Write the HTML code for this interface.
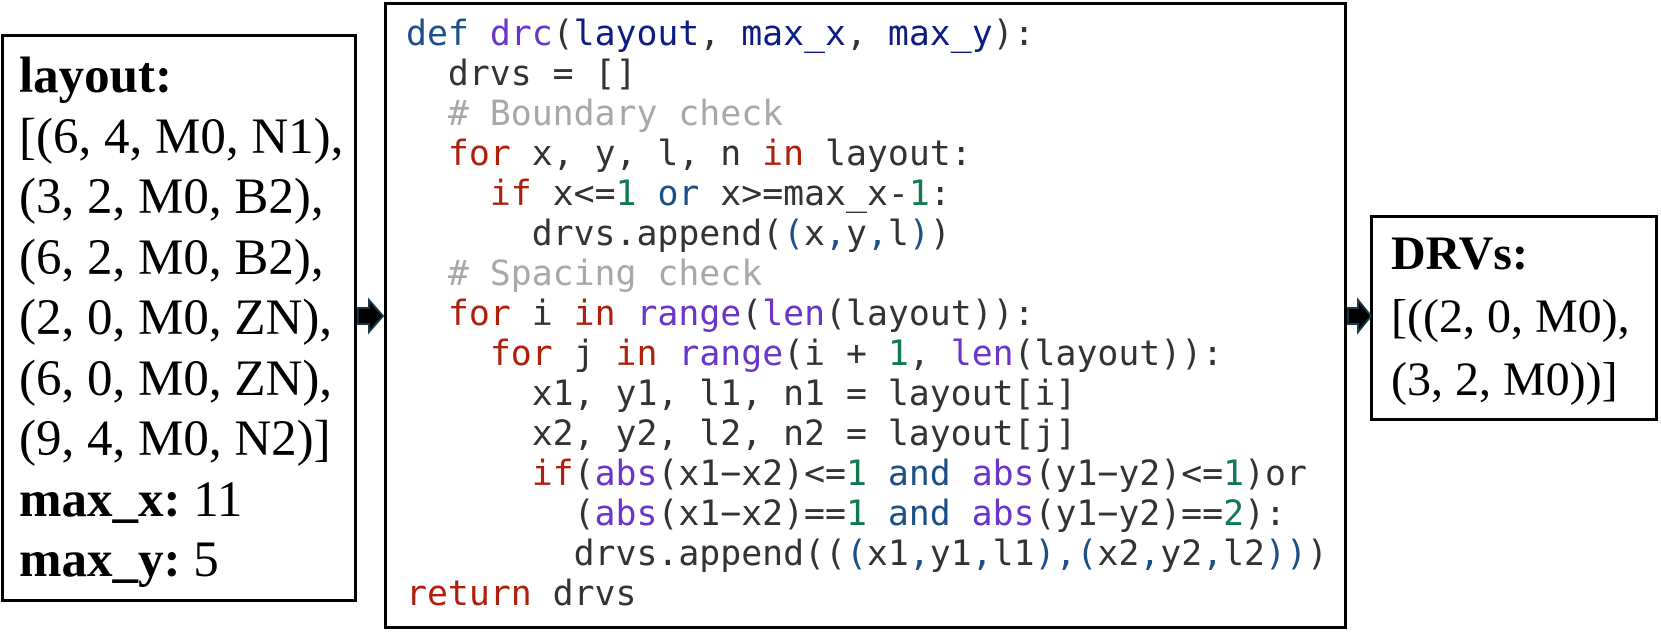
<!DOCTYPE html>
<html><head><meta charset="utf-8"><style>
html,body{margin:0;padding:0;background:#fff;width:1661px;height:632px;overflow:hidden;position:relative}
.box{position:absolute;border:3px solid #000;box-sizing:border-box;background:#fff}
.tm{font-family:"Liberation Serif",serif;color:#000;position:absolute;white-space:pre;margin:0}
.code{position:absolute;left:406px;top:14px;font-family:"DejaVu Sans Mono",monospace;font-size:34.8px;line-height:40px;white-space:pre;color:#333}
.k{color:#b01f0c}.d{color:#1a4f8a}.f{color:#6a35c8}.n{color:#117a4f}.c{color:#a8a8a8}.p{color:#0d1d85}.b{color:#1a4f8a}
</style></head><body>
<div class="box" style="left:1px;top:34px;width:356px;height:568px"></div>
<div class="tm" style="left:19px;top:46px;font-size:51px;line-height:60.5px"><b>layout:</b>
[(6, 4, M0, N1),
(3, 2, M0, B2),
(6, 2, M0, B2),
(2, 0, M0, ZN),
(6, 0, M0, ZN),
(9, 4, M0, N2)]
<b>max_x:</b> 11
<b>max_y:</b> 5</div>
<div class="box" style="left:384px;top:2px;width:963px;height:627px"></div>
<div class="code"><span class="d">def</span> <span class="f">drc</span>(<span class="p">layout</span>, <span class="p">max_x</span>, <span class="p">max_y</span>):
  drvs = []
  <span class="c"># Boundary check</span>
  <span class="k">for</span> x, y, l, n <span class="k">in</span> layout:
    <span class="k">if</span> x&lt;=<span class="n">1</span> <span class="b">or</span> x&gt;=max_x-<span class="n">1</span>:
      drvs.append(<span class="b">(</span>x<span class="b">,</span>y<span class="b">,</span>l<span class="b">)</span>)
  <span class="c"># Spacing check</span>
  <span class="k">for</span> i <span class="k">in</span> <span class="f">range</span>(<span class="f">len</span>(layout)):
    <span class="k">for</span> j <span class="k">in</span> <span class="f">range</span>(i + <span class="n">1</span>, <span class="f">len</span>(layout)):
      x1, y1, l1, n1 = layout[i]
      x2, y2, l2, n2 = layout[j]
      <span class="k">if</span>(<span class="f">abs</span>(x1−x2)&lt;=<span class="n">1</span> <span class="b">and</span> <span class="f">abs</span>(y1−y2)&lt;=<span class="n">1</span>)or
        (<span class="f">abs</span>(x1−x2)==<span class="n">1</span> <span class="b">and</span> <span class="f">abs</span>(y1−y2)==<span class="n">2</span>):
        drvs.append((<span class="b">(</span>x1<span class="b">,</span>y1<span class="b">,</span>l1<span class="b">),(</span>x2<span class="b">,</span>y2<span class="b">,</span>l2<span class="b">))</span>)
<span class="k">return</span> drvs</div>
<div class="box" style="left:1370px;top:215px;width:288px;height:206px"></div>
<div class="tm" style="left:1391px;top:222px;font-size:48px;line-height:63px"><b>DRVs:</b>
[((2, 0, M0),
(3, 2, M0))]</div>
<svg style="position:absolute;left:0;top:0" width="1661" height="632">
<polygon points="358,308 369,308 369,300 383,316 369,332 369,324 358,324" fill="#000" stroke="#1a3a4a" stroke-width="2"/>
<polygon points="1348,308 1358,308 1358,300 1371,316 1358,332 1358,324 1348,324" fill="#000" stroke="#1a3a4a" stroke-width="2"/>
</svg>
</body></html>
